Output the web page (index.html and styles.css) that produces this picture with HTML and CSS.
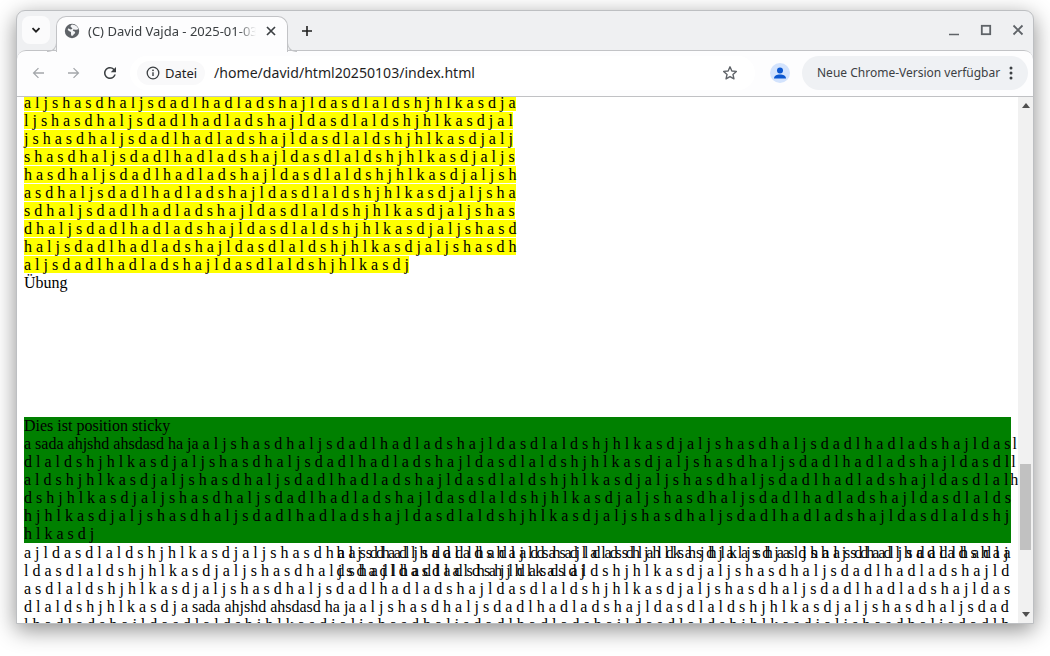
FILE: index.html
```html
<!DOCTYPE html>
<html lang="de">
<head>
<meta charset="utf-8">
<title>(C) David Vajda - 2025-01-03</title>
<link rel="stylesheet" href="styles.css">
</head>
<body>
<div class="window">
  <div class="tabstrip">
    <div class="tabsearch"><svg width="12" height="12" viewBox="0 0 12 12"><path d="M2.5 4.2 6 7.7l3.5-3.5" fill="none" stroke="#1f1f1f" stroke-width="1.8"/></svg></div>
    <div class="tab">
      <svg class="favicon" width="16" height="16" viewBox="0 0 16 16"><circle cx="8" cy="8" r="7.2" fill="#5f6368"/><path d="M8 1.4c-1 .6-1.6 1.2-1.4 2 .2.9 1.500 1 1.700 1.800.2.700-.7 1.200-1.500 1.200-.8 0-1.300-.8-2.200-.8-.7 0-1 .6-.7 1.300.4 1 1.800 1.200 2.700 1.800.6.400.5 1.200.4 1.900-.1.800.1 1.700.700 2.300l1.300-.4c.4-1.100 1.400-1.700 2-2.600.4-.6.100-1.200-.5-1.500-.7-.3-1.500-.3-1.700-1.100-.1-.7.500-1 1.200-.9.800.1 1.500.5 2.300.4.700-.1 1.500-.4 2-.9C14 4 11.500 1.600 8 1.400z" fill="#f3f4f6"/></svg>
      <span class="tabtitle">(C) David Vajda - 2025-01-03</span>
      <svg class="tabclose" width="12" height="12" viewBox="0 0 12 12"><path d="M2 2l8 8M10 2l-8 8" stroke="#3c4043" stroke-width="1.700" fill="none"/></svg>
    </div>
    <div class="newtab"><svg width="12" height="12" viewBox="0 0 12 12"><path d="M6 1v10M1 6h10" stroke="#1f1f1f" stroke-width="1.600" fill="none"/></svg></div>
    <div class="wincontrols">
      <svg width="12" height="12" viewBox="0 0 12 12"><path d="M1 10.500h10" stroke="#5f6368" stroke-width="1.600" fill="none"/></svg>
      <svg width="12" height="12" viewBox="0 0 12 12"><rect x="1.800" y="1.800" width="8.400" height="8.400" stroke="#5f6368" stroke-width="1.800" fill="none"/></svg>
      <svg width="12" height="12" viewBox="0 0 12 12"><path d="M1.500 1.500l9 9M10.500 1.500l-9 9" stroke="#5f6368" stroke-width="1.800" fill="none"/></svg>
    </div>
  </div>
  <div class="toolbar">
    <svg class="navicon" width="16" height="16" viewBox="0 0 24 24"><path d="M21 11H7.800l5.600-5.600L12 4l-8 8 8 8 1.400-1.400L7.800 13H21z" fill="#a4a7ab"/></svg>
    <svg class="navicon" width="16" height="16" viewBox="0 0 24 24"><path d="M3 11h13.200l-5.600-5.600L12 4l8 8-8 8-1.400-1.400 5.600-5.600H3z" fill="#a4a7ab"/></svg>
    <svg class="navicon" width="18" height="18" viewBox="0 0 24 24"><path d="M17.650 6.350A7.960 7.960 0 0 0 12 4C7.580 4 4 7.580 4 12s3.580 8 8 8c3.730 0 6.840-2.550 7.730-6h-2.080A5.990 5.990 0 0 1 12 18c-3.310 0-6-2.690-6-6s2.690-6 6-6c1.660 0 3.140.690 4.220 1.780L13 11h7V4z" fill="#3c4043"/></svg>
    <div class="omnibox">
      <div class="chip">
        <svg width="14" height="14" viewBox="0 0 14 14"><circle cx="7" cy="7" r="5.800" fill="none" stroke="#3c4043" stroke-width="1.300"/><path d="M7 6.200v3.900" stroke="#3c4043" stroke-width="1.400"/><circle cx="7" cy="4.300" r=".9" fill="#3c4043"/></svg>
        <span>Datei</span>
      </div>
      <span class="url">/home/david/html20250103/index.html</span>
      <svg class="star" width="16" height="16" viewBox="0 0 16 16"><path d="M8 1.800l1.850 4.150 4.500.45-3.400 3 1 4.450L8 11.550 4.050 13.850l1-4.450-3.400-3 4.500-.45z" fill="none" stroke="#5f6368" stroke-width="1.400" stroke-linejoin="round"/></svg>
    </div>
    <svg class="avatar" width="20" height="20" viewBox="0 0 20 20"><circle cx="10" cy="10" r="10" fill="#d3e3fd"/><circle cx="10" cy="7.400" r="3" fill="#0b57d0"/><path d="M4 15.500c0-2.600 2.700-4 6-4s6 1.400 6 4z" fill="#0b57d0"/></svg>
    <div class="update">
      <span>Neue Chrome-Version verfügbar</span>
      <svg width="4" height="14" viewBox="0 0 4 14"><circle cx="2" cy="2" r="1.500" fill="#3c4043"/><circle cx="2" cy="7" r="1.500" fill="#3c4043"/><circle cx="2" cy="12" r="1.500" fill="#3c4043"/></svg>
    </div>
  </div>
  <div class="viewport">
    <div class="page">
      <div class="yellowtext">
        <div><span>a l j s h a s d h a l j s d a d l h a d l a d s h a j l d a s d l a l d s h j h l k a s d j a</span></div>
        <div><span>l j s h a s d h a l j s d a d l h a d l a d s h a j l d a s d l a l d s h j h l k a s d j a l</span></div>
        <div><span>j s h a s d h a l j s d a d l h a d l a d s h a j l d a s d l a l d s h j h l k a s d j a l j</span></div>
        <div><span>s h a s d h a l j s d a d l h a d l a d s h a j l d a s d l a l d s h j h l k a s d j a l j s</span></div>
        <div><span>h a s d h a l j s d a d l h a d l a d s h a j l d a s d l a l d s h j h l k a s d j a l j s h</span></div>
        <div><span>a s d h a l j s d a d l h a d l a d s h a j l d a s d l a l d s h j h l k a s d j a l j s h a</span></div>
        <div><span>s d h a l j s d a d l h a d l a d s h a j l d a s d l a l d s h j h l k a s d j a l j s h a s</span></div>
        <div><span>d h a l j s d a d l h a d l a d s h a j l d a s d l a l d s h j h l k a s d j a l j s h a s d</span></div>
        <div><span>h a l j s d a d l h a d l a d s h a j l d a s d l a l d s h j h l k a s d j a l j s h a s d h</span></div>
        <div><span>a l j s d a d l h a d l a d s h a j l d a s d l a l d s h j h l k a s d j</span></div>
      </div>
      <div class="exercise">Übung</div>
      <div class="sticky">
        <div>Dies ist position sticky</div>
        <div>a sada ahjshd ahsdasd ha ja a l j s h a s d h a l j s d a d l h a d l a d s h a j l d a s d l a l d s h j h l k a s d j a l j s h a s d h a l j s d a d l h a d l a d s h a j l d a s<span class="spill">l</span></div>
        <div>d l a l d s h j h l k a s d j a l j s h a s d h a l j s d a d l h a d l a d s h a j l d a s d l a l d s h j h l k a s d j a l j s h a s d h a l j s d a d l h a d l a d s h a j l d a s d l<span class="spill">l</span></div>
        <div>a l d s h j h l k a s d j a l j s h a s d h a l j s d a d l h a d l a d s h a j l d a s d l a l d s h j h l k a s d j a l j s h a s d h a l j s d a d l h a d l a d s h a j l d a s d l a l<span class="spill">h</span></div>
        <div>d s h j h l k a s d j a l j s h a s d h a l j s d a d l h a d l a d s h a j l d a s d l a l d s h j h l k a s d j a l j s h a s d h a l j s d a d l h a d l a d s h a j l d a s d l a l d s</div>
        <div>h j h l k a s d j a l j s h a s d h a l j s d a d l h a d l a d s h a j l d a s d l a l d s h j h l k a s d j a l j s h a s d h a l j s d a d l h a d l a d s h a j l d a s d l a l d s h j</div>
        <div>h l k a s d j</div>
      </div>
      <div class="below">
        <div>a j l d a s d l a l d s h j h l k a s d j a l j s h a s d h a l j s d a d l h a d l a d s h a j l d a s d l a l d s h j h l k a s d j a l j s h a s d h a l j s d a d l h a d l a d s h a j</div>
        <div>l d a s d l a l d s h j h l k a s d j a l j s h a s d h a l j s d a d l h a d l a d s h a j l d a s d l a l d s h j h l k a s d j a l j s h a s d h a l j s d a d l h a d l a d s h a j l d</div>
        <div>a s d l a l d s h j h l k a s d j a l j s h a s d h a l j s d a d l h a d l a d s h a j l d a s d l a l d s h j h l k a s d j a l j s h a s d h a l j s d a d l h a d l a d s h a j l d a s</div>
        <div>d l a l d s h j h l k a s d j a sada ahjshd ahsdasd ha ja a l j s h a s d h a l j s d a d l h a d l a d s h a j l d a s d l a l d s h j h l k a s d j a l j s h a s d h a l j s d a d</div>
        <div>l h a d l a d s h a j l d a s d l a l d s h j h l k a s d j a l j s h a s d h a l j s d a d l h a d l a d s h a j l d a s d l a l d s h j h l k a s d j a l j s h a s d h a l j s d a d l h</div>
        <div class="overlay">
          <div>h a s d h a l j s d a d l h a d l a d s h a j l d a s d l a l d s h j h l k a s d j a l j s h a s d h a l j s d a d l h a d l a</div>
          <div>d s h a j l d a s d l a l d s h j h l k a s d j</div>
        </div>
      </div>
    </div>
    <div class="scrollbar">
      <div class="arrow up"></div>
      <div class="thumb"></div>
      <div class="arrow down"></div>
    </div>
  </div>
</div>
</body>
</html>
```
FILE: styles.css
```css
* { box-sizing: border-box; }
html, body { margin: 0; height: 100%; background: #fff; overflow: hidden; }
body { padding: 10px 16px 32px; }

.window {
  height: 614px;
  display: flex;
  flex-direction: column;
  border: 1px solid #bdbfc2;
  border-radius: 9px 9px 0 0;
  background: #eff0f2;
  box-shadow: 0 6px 22px rgba(0, 0, 0, .45);
  overflow: hidden;
  font-family: "Noto Sans", sans-serif;
  color: #3c4043;
}

.tabstrip {
  height: 40px;
  flex: none;
  display: flex;
  align-items: flex-start;
  padding: 5px 0 0 5px;
  position: relative;
  z-index: 2;
}
.tabsearch {
  width: 28px;
  height: 28px;
  border-radius: 8px;
  background: #fbfbfc;
  display: flex;
  align-items: center;
  justify-content: center;
  margin-right: 6px;
}
.tab {
  width: 232px;
  height: 36px;
  background: #fdfdfe;
  border: 1px solid #c2c3c6;
  border-bottom: none;
  border-radius: 10px 10px 0 0;
  display: flex;
  align-items: center;
  padding: 0 0 7px 7px;
  position: relative;
  font-size: 13px;
}
.tab::before, .tab::after {
  content: "";
  position: absolute;
  bottom: 0;
  width: 9px;
  height: 9px;
  border-bottom: 1px solid #c2c3c6;
}
.tab::before { left: -10px; border-right: 1px solid #c2c3c6; border-bottom-right-radius: 9px; }
.tab::after { right: -10px; border-left: 1px solid #c2c3c6; border-bottom-left-radius: 9px; }
.favicon { flex: none; margin-right: 8px; }
.tabtitle {
  width: 168px;
  flex: none;
  white-space: nowrap;
  overflow: hidden;
  -webkit-mask-image: linear-gradient(to right, #000 150px, transparent 168px);
  mask-image: linear-gradient(to right, #000 150px, transparent 168px);
}
.tabclose { flex: none; margin-left: 9px; }
.newtab {
  margin: 9px 0 0 13px;
  width: 12px;
  height: 12px;
  line-height: 0;
}
.wincontrols {
  margin: 8px 9px 0 auto;
  display: flex;
  gap: 20px;
  line-height: 0;
}

.toolbar {
  height: 47px;
  flex: none;
  display: flex;
  align-items: center;
  background: #fdfdfe;
  border-top: 1px solid #c2c3c6;
  border-bottom: 1px solid #c0c1c4;
  border-radius: 9px 9px 0 0;
  margin-top: -1px;
  padding: 0 0 2px 13px;
  font-size: 14px;
  position: relative;
  z-index: 1;
}
.navicon { flex: none; margin-right: 20px; }
.navicon + .navicon { margin-right: 19px; }
.navicon + .navicon + .navicon { margin-right: 11px; }
.omnibox {
  width: 625px;
  height: 34px;
  flex: none;
  border-radius: 17px;
  background: #fff;
  display: flex;
  align-items: center;
  padding-left: 7px;
}
.chip {
  width: 68px;
  height: 24px;
  flex: none;
  display: flex;
  align-items: center;
  gap: 5px;
  padding-left: 9px;
  border-radius: 12px;
  background: #f9f9fa;
  font-size: 13px;
  color: #1f1f1f;
}
.url { margin-left: 9px; color: #1f1f1f; white-space: nowrap; font-size: 14.1px; }
.star { margin-left: auto; margin-right: 17px; flex: none; }
.avatar { flex: none; margin-left: 15px; }
.update {
  width: 226px;
  height: 34px;
  flex: none;
  margin-left: 12px;
  border-radius: 17px;
  background: #eff1f4;
  display: flex;
  align-items: center;
  padding-left: 15px;
  font-size: 12px;
  white-space: nowrap;
}
.update svg { margin-left: auto; margin-right: 15px; }

.viewport {
  flex: 1;
  min-height: 0;
  display: flex;
  background: #fff;
  position: relative;
}
.page {
  flex: 1;
  min-width: 0;
  overflow: hidden;
  padding-left: 7px;
  font-family: "Liberation Serif", serif;
  font-size: 16px;
  color: #000;
  white-space: nowrap;
  position: relative;
}
.yellowtext { margin-top: -3px; }
.yellowtext span { background: #ff0; }
.exercise { height: 18px; }
.sticky {
  width: 987px;
  margin-top: 125px;
  background: #008000;
}
.below { margin-top: 1px; position: relative; }
.overlay { position: absolute; left: 312.5px; top: 0; }
.spill { margin-left: 2px; }

.scrollbar {
  width: 15px;
  flex: none;
  background: #f1f1f1;
  display: flex;
  flex-direction: column;
  align-items: center;
  position: relative;
}
.thumb {
  width: 11px;
  height: 86px;
  margin-top: 356px;
  background: #c1c1c1;
}
.arrow {
  width: 0;
  height: 0;
  border-left: 4px solid transparent;
  border-right: 4px solid transparent;
  flex: none;
}
.arrow.up { margin-top: 6px; border-bottom: 5px solid #505050; }
.arrow.down { margin-top: auto; margin-bottom: 6px; border-top: 5px solid #505050; }
```
